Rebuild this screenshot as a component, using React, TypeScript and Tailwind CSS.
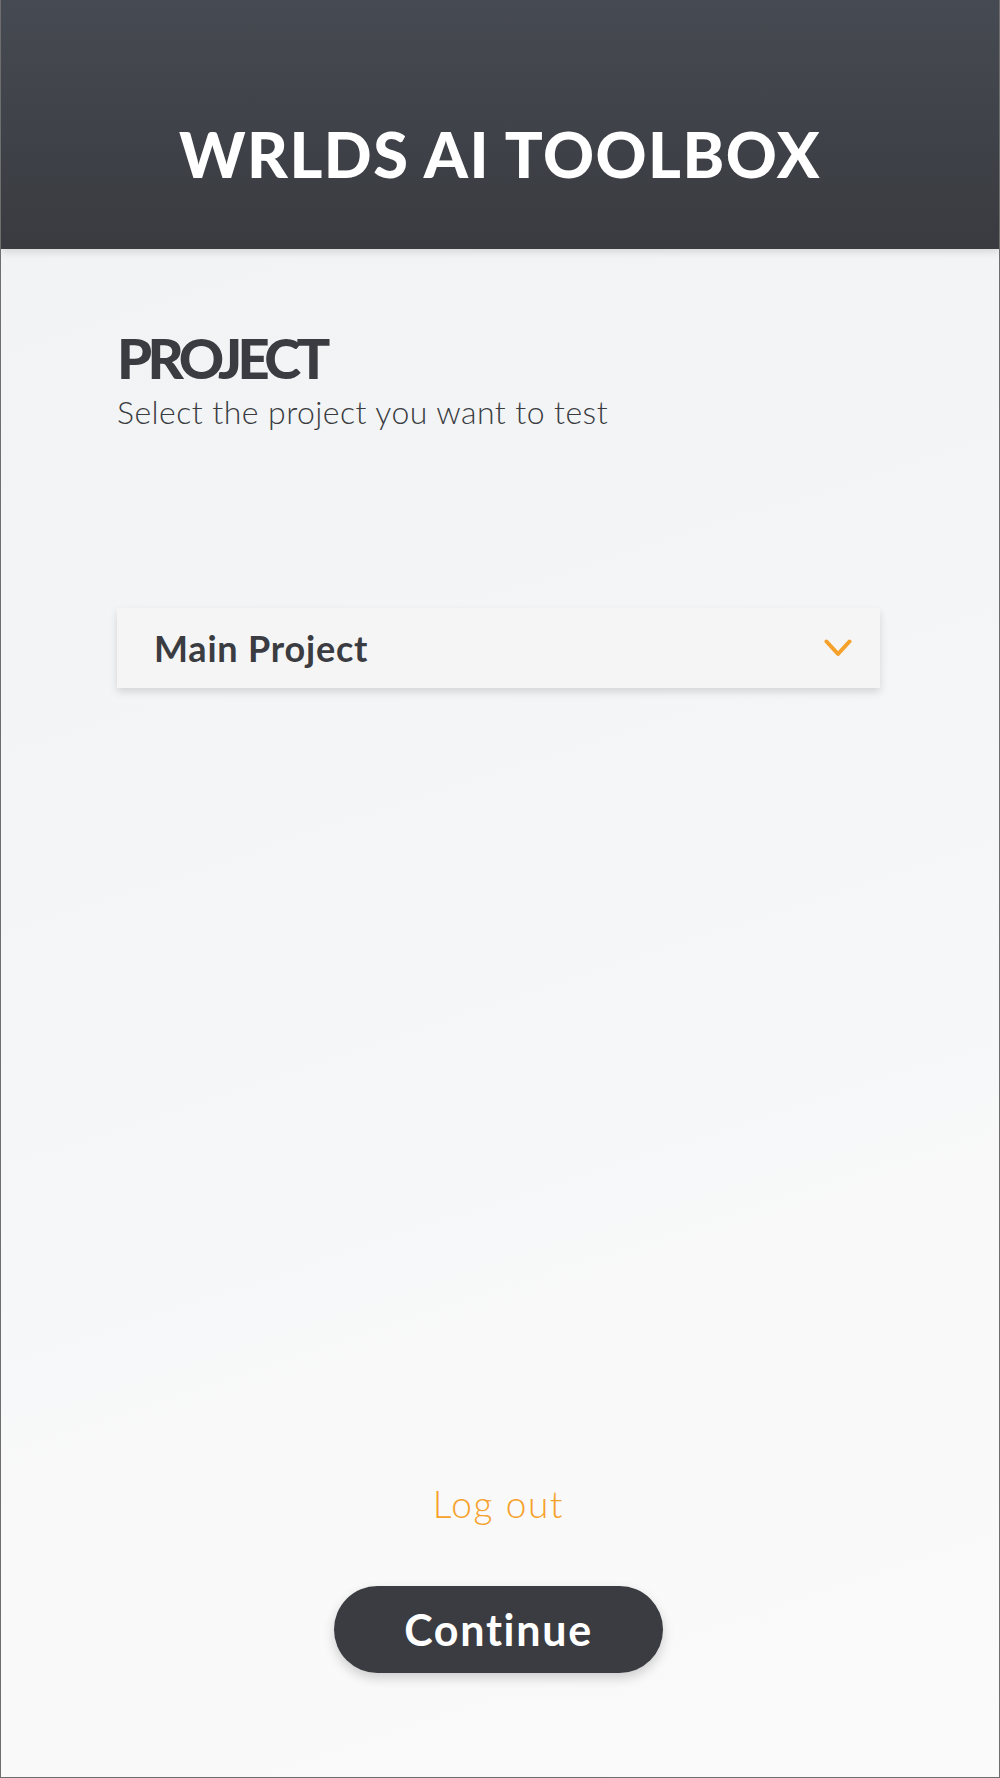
import React from "react";

export default function App() {
  return (
    <div
      className="min-h-[1778px] h-[1778px] w-full flex flex-col border-l border-r border-b border-[#6e6e6e] overflow-hidden"
      style={{ fontFamily: "Lato, 'Open Sans', sans-serif" }}
    >
      <header className="relative z-10 h-[249px] shrink-0 bg-gradient-to-b from-[#464a52] to-[#393b40] flex justify-center pt-[122px] shadow-[0_3px_8px_rgba(0,0,0,0.12)]">
        <h1 className="text-[63px] leading-none font-black text-white tracking-[1.5px]">
          WRLDS AI TOOLBOX
        </h1>
      </header>
      <main className="flex-1 flex flex-col pl-[116px] pr-[119px] bg-[linear-gradient(162deg,#f2f3f5_0%,#f4f5f7_35%,#f6f7f9_55%,#f9f9f9_70%,#fafafa_100%)]">
        <h2 className="mt-[81px] text-[56px] leading-none font-black text-[#3a3c41] tracking-[-4.6px]">
          PROJECT
        </h2>
        <p className="mt-[10px] text-[32px] leading-none font-light text-[#3a3c41] tracking-[0.45px]">
          Select the project you want to test
        </p>
        <button className="mt-[180px] h-[80px] w-full flex items-center justify-between pl-[37px] pr-[28px] bg-[#f5f5f5] shadow-[0_4px_8px_rgba(0,0,0,0.13)]">
          <span className="text-[36px] leading-none font-bold text-[#3a3c41] tracking-[0.8px]">
            Main Project
          </span>
          <svg width="28" height="18" viewBox="0 0 28 18" fill="none">
            <path
              d="M2.5 2.5 L14 15 L25.5 2.5"
              stroke="#f6a12a"
              strokeWidth="4"
              strokeLinecap="round"
              strokeLinejoin="round"
            />
          </svg>
        </button>
        <div className="flex-1" />
        <div className="flex flex-col items-center pb-[104px]">
          <a className="text-[37px] leading-none font-light text-[#f6a12a] tracking-[1.6px]">Log out</a>
          <button className="mt-[64px] w-[329px] h-[87px] rounded-full bg-[#3a3c41] text-white text-[43px] font-bold leading-none tracking-[1.7px] shadow-[0_5px_12px_rgba(0,0,0,0.18)]">
            Continue
          </button>
        </div>
      </main>
    </div>
  );
}
